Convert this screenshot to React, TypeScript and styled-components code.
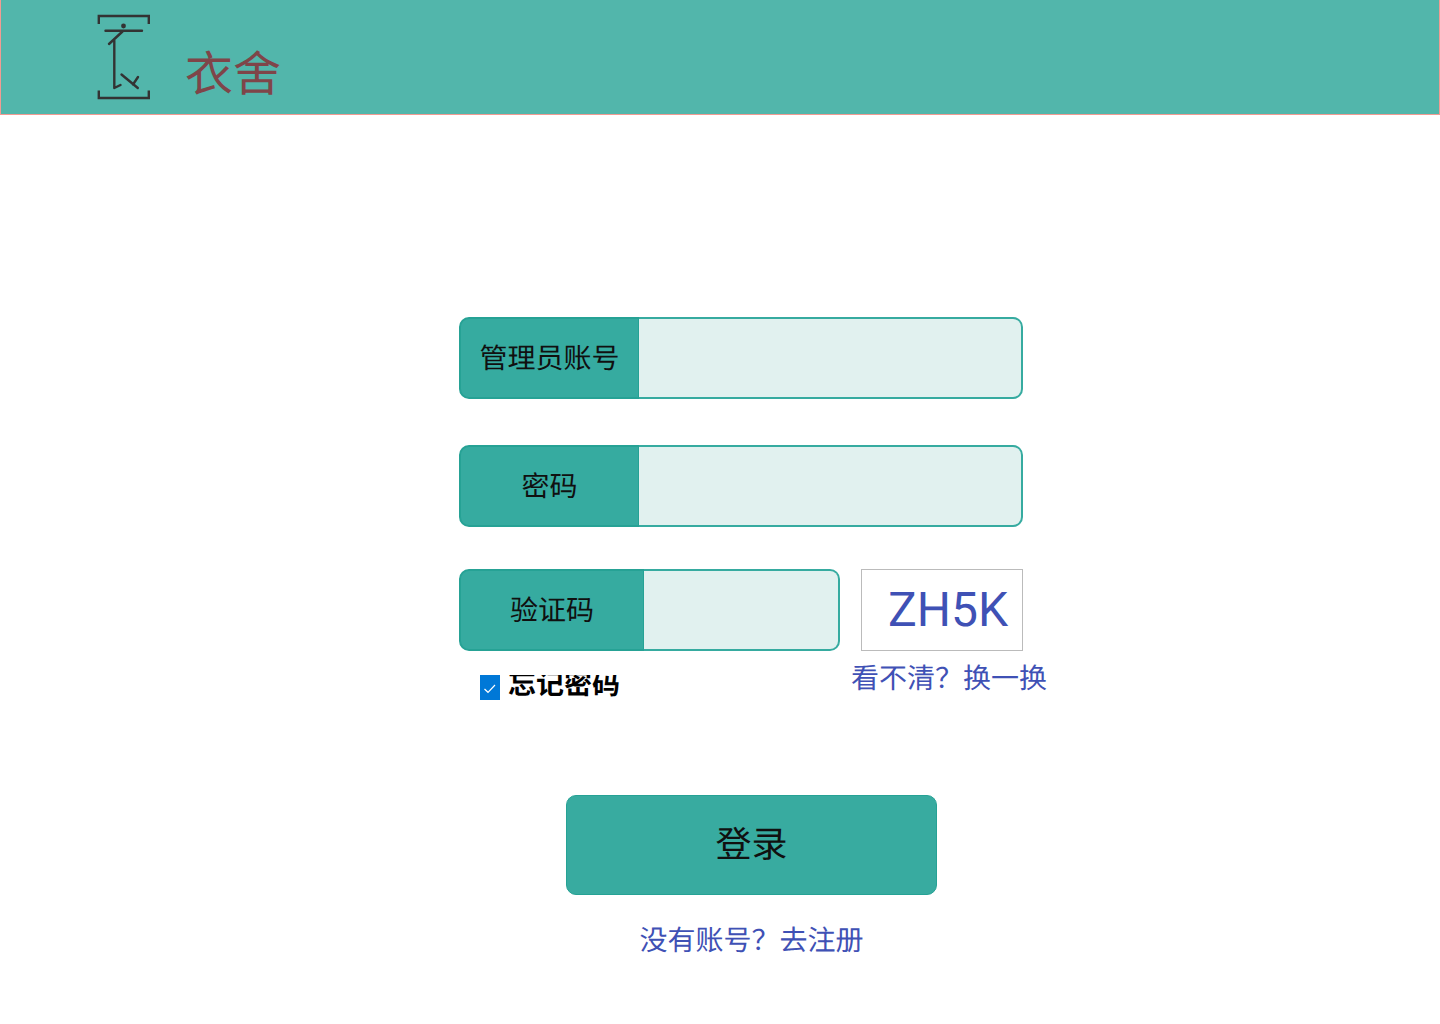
import React, { useId, useState } from "react";
import styled, { createGlobalStyle } from "styled-components";

const GlobalStyle = createGlobalStyle`
  *, *::before, *::after { box-sizing: border-box; }
  body {
    margin: 0;
    background: #ffffff;
    color: #101010;
    font-family: Roboto, "Noto Sans CJK SC", sans-serif;
    font-size: 28px;
    line-height: 40px;
    text-rendering: geometricPrecision;
  }
  button, input { font: inherit; color: inherit; text-rendering: inherit; }
`;

const Header = styled.header`
  display: flex;
  align-items: flex-start;
  gap: 34px;
  height: 115px;
  padding: 13px 95px 0;
  background: #52b6ab;
  border: 1px solid #f29b93;
  border-top: 0;
`;

const Mark = styled.svg`
  width: 55px;
  height: 88px;
  fill: none;
  stroke: #333333;
  stroke-width: 2.4;
`;

const Brand = styled.h1`
  margin: 0;
  padding-top: 32px;
  color: #7f4549;
  font-size: 48px;
  font-weight: 400;
  line-height: 60px;
`;

const Main = styled.main`
  display: flex;
  justify-content: center;
  padding: 202px 0 48px 63px;
`;

const Form = styled.form`
  display: flex;
  flex-direction: column;
  width: 585px;
  max-width: 100%;
`;

const Fields = styled.div`
  display: flex;
  flex-direction: column;
  gap: 46px;
  padding-right: 21px;
`;

const FieldBox = styled.div`
  display: flex;
  flex: 1 0 auto;
  min-width: 0;
  height: 82px;
`;

const FieldLabel = styled.label<{ $width: number }>`
  display: flex;
  align-items: center;
  justify-content: center;
  flex: none;
  width: ${(p) => p.$width}px;
  padding-top: 2px;
  background: #36aba0;
  border: 2px solid #26a295;
  border-right-width: 1px;
  border-radius: 10px 0 0 10px;
`;

const FieldInput = styled.input`
  flex: 1;
  width: 0;
  min-width: 0;
  padding: 0 16px;
  background: #e1f1ef;
  border: 2px solid #36aba0;
  border-left: 0;
  border-radius: 0 10px 10px 0;
  outline: none;
`;

const CodeRow = styled.div`
  display: flex;
  gap: 21px;
  margin-top: 42px;
  padding-right: 21px;
`;

const Captcha = styled.output`
  display: flex;
  align-items: center;
  justify-content: center;
  width: 162px;
  height: 82px;
  padding-left: 12px;
  border: 1px solid #bbbbbb;
  color: #3f51b5;
  font-size: 48px;
`;

const Options = styled.div`
  display: grid;
  grid-template-columns: 371px 1fr;
  align-items: start;
  padding: 8px 0 0 21px;
`;

const Remember = styled.label`
  display: flex;
  gap: 8px;
  height: 25px;
  margin-top: 16px;
  overflow: hidden;
  color: #000000;
  font-weight: 700;
  line-height: 20px;
`;

const Tick = styled.span`
  display: grid;
  width: 20px;
  height: 25px;
  > * { grid-area: 1 / 1; }
`;

const TickInput = styled.input`
  appearance: none;
  width: 20px;
  height: 25px;
  margin: 0;
  background: #ffffff;
  border: 1px solid #0078d7;
  &:checked { background: #0078d7; }
`;

const TickMark = styled.svg`
  width: 20px;
  height: 25px;
  fill: none;
  stroke: #ffffff;
  stroke-width: 1.2;
  pointer-events: none;
`;

const Refresh = styled.button`
  padding: 0;
  background: none;
  border: 0;
  color: #3f51b5;
  white-space: nowrap;
  text-align: left;
  cursor: pointer;
`;

const Submit = styled.button`
  align-self: center;
  width: 371px;
  height: 100px;
  margin-top: 95px;
  padding: 0;
  background: #38aba0;
  border: 1px solid #26a295;
  border-radius: 10px;
  font-size: 36px;
  cursor: pointer;
`;

const Register = styled.a`
  align-self: center;
  margin-top: 26px;
  color: #3f51b5;
  text-decoration: none;
`;

type FieldProps = { label: string; type?: string; labelWidth?: number };

function Field({ label, type = "text", labelWidth = 180 }: FieldProps) {
  const id = useId();
  return (
    <FieldBox>
      <FieldLabel htmlFor={id} $width={labelWidth}>{label}</FieldLabel>
      <FieldInput id={id} type={type} />
    </FieldBox>
  );
}

const codes = ["ZH5K", "M7QD", "R3WX"];

export default function App() {
  const [code, setCode] = useState(0);
  const [remember, setRemember] = useState(true);
  return (
    <>
      <GlobalStyle />
      <Header>
        <Mark viewBox="0 0 55 88" aria-hidden="true">
          <path d="M2.8 11V3H52.8V11M2.8 77.5V85H52.8V77.5" />
          <g strokeLinecap="round" strokeLinejoin="round">
            <path d="M9.5 17.8H46M26.5 18.5L13 31M18.3 27.5V75L24.5 72M25.5 61.5L41.8 75M42 64L37 71.5" />
          </g>
          <circle cx="27.5" cy="13" r="2.4" fill="#333333" stroke="none" />
        </Mark>
        <Brand>衣舍</Brand>
      </Header>
      <Main>
        <Form onSubmit={(e) => e.preventDefault()}>
          <Fields>
            <Field label="管理员账号" />
            <Field label="密码" type="password" />
          </Fields>
          <CodeRow>
            <Field label="验证码" labelWidth={185} />
            <Captcha>{codes[code]}</Captcha>
          </CodeRow>
          <Options>
            <Remember>
              <Tick>
                <TickInput
                  type="checkbox"
                  checked={remember}
                  onChange={(e) => setRemember(e.target.checked)}
                />
                <TickMark viewBox="0 0 20 25" aria-hidden="true">
                  <path d="M4.5 14L8 17.3L15 10" />
                </TickMark>
              </Tick>
              忘记密码
            </Remember>
            <Refresh type="button" onClick={() => setCode((code + 1) % codes.length)}>
              看不清？换一换
            </Refresh>
          </Options>
          <Submit type="submit">登录</Submit>
          <Register href="#register">没有账号？去注册</Register>
        </Form>
      </Main>
    </>
  );
}
